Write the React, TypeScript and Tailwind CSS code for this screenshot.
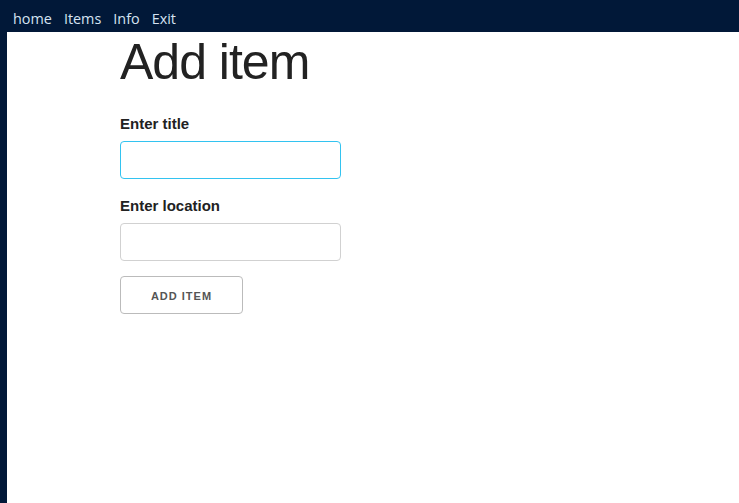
import React from "react";

export default function App() {
  return (
    <div className="min-h-[503px] w-full bg-[#011838] flex flex-col">
      <nav className="h-[32px] flex items-end pb-[3px] pl-[13px] gap-[12px] text-[14.4px] leading-[20px] text-[#d5e3f2]" style={{ fontFamily: '"Open Sans", "Noto Sans", sans-serif' }}>
        <a>home</a>
        <a>Items</a>
        <a>Info</a>
        <a>Exit</a>
      </nav>
      <main className="ml-[7px] flex-1 bg-white pl-[113px] text-[#222]" style={{ fontFamily: '"Liberation Sans", Arial, sans-serif' }}>
        <h1 className="text-[50px] leading-[60px] font-light tracking-[-1px] mb-[20px]">Add item</h1>
        <form className="flex flex-col items-start">
          <label className="text-[15px] leading-[24px] font-bold mb-[5px]">Enter title</label>
          <input className="w-[221px] h-[38px] rounded-[4px] border border-[#33c3f0] px-[10px] mb-[15px] outline-none bg-white" />
          <label className="text-[15px] leading-[24px] font-bold mb-[5px]">Enter location</label>
          <input className="w-[221px] h-[38px] rounded-[4px] border border-[#d1d1d1] px-[10px] mb-[15px] outline-none bg-white" />
          <button type="button" className="w-[123px] h-[38px] rounded-[4px] border border-[#bbb] text-[11px] leading-[38px] font-bold tracking-[1px] uppercase text-[#555] bg-transparent">Add item</button>
        </form>
      </main>
    </div>
  );
}
